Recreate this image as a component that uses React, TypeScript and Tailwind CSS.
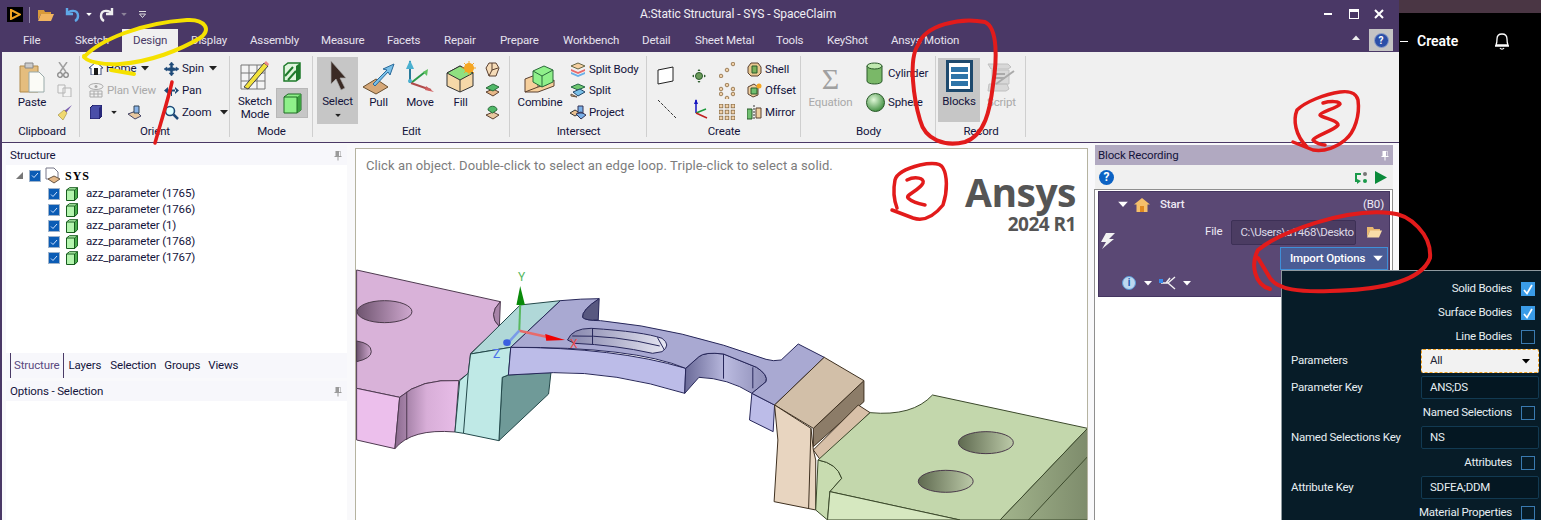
import React from "react";

const Chev = ({ c = "#222", className = "" }: { c?: string; className?: string }) => (
  <svg width="8" height="5" viewBox="0 0 8 5" className={`shrink-0 ${className}`}><path d="M0 0h8L4 4.5z" fill={c} /></svg>
);
const S = ({ w, h, vb, children, className = "" }: { w: number; h: number; vb?: string; children: React.ReactNode; className?: string }) => (
  <svg width={w} height={h} viewBox={vb ?? `0 0 ${w} ${h}`} className={`shrink-0 ${className}`}>{children}</svg>
);

const Cube = ({ size = 14 }: { size?: number }) => (
  <S w={size} h={size} vb="0 0 14 14">
    <path d="M1.500 3 4.500 .7h8v10l-3 2.800H1.500z" fill="#b4f5ae" stroke="#175c1e" strokeWidth="1" />
    <path d="M9.500 3l3-2.300v10l-3 2.800z" fill="#4aad4c" stroke="#175c1e" strokeWidth=".8" />
    <path d="M1.500 3h8v10.500" fill="none" stroke="#175c1e" strokeWidth="1" />
  </S>
);
const Check = ({ on = true }: { on?: boolean }) => (
  <span className="w-[12px] h-[12px] bg-[#0b5cb5] border border-[#9fb4cc] flex items-center justify-center shrink-0">
    {on && <svg width="8" height="7" viewBox="0 0 8 7"><path d="M1 3.5 3 5.5 7 1" fill="none" stroke="#cfe2ff" strokeWidth="1" /></svg>}
  </span>
);
const Pin = ({ c = "#9a9a9a" }: { c?: string }) => (
  <svg width="8" height="11" viewBox="0 0 8 11"><path d="M1.500 1h5v5h1v1H4.500v3.500h-1V7H.5V6h1zM5 1.500v4.500h1V1.500z" fill={c} /></svg>
);

const Group = ({ w, label, children }: { w: string; label: string; children: React.ReactNode }) => (
  <div className={`${w} shrink-0 h-full flex flex-col relative`}>
    <div className="h-[71px] pt-[7px] flex">{children}</div>
    <div className="text-center h-[18px] leading-[17px] text-[#14143c]">{label}</div>
    <div className="absolute right-0 top-[4px] bottom-[5px] w-px bg-[#cfcfcf]" />
  </div>
);

const Small = ({ icon, text, chev, grey, className = "", gap = "ml-[9px]" }: { icon: React.ReactNode; text?: string; chev?: boolean; grey?: boolean; className?: string; gap?: string }) => (
  <div className={`h-[22px] flex items-center ${className}`}>
    {icon}
    {text && <span className={`ml-[3px] whitespace-nowrap ${grey ? "text-[#a9a9a9]" : "text-[#14143c]"}`}>{text}</span>}
    {chev && <Chev className={gap} />}
  </div>
);

const Big = ({ label, icon, w, grey }: { label: string; icon: React.ReactNode; w: string; grey?: boolean }) => (
  <div className={`${w} flex flex-col items-center shrink-0`}>
    <div className="h-[36px] flex items-center">{icon}</div>
    <span className={`whitespace-nowrap leading-[14px] ${grey ? "text-[#a9a9a9]" : "text-[#14143c]"}`}>{label}</span>
  </div>
);

const tabs: [string, string, string][] = [
  ["File", "w-[52px]", "pl-[11px]"], ["Sketch", "w-[58px]", "pl-[11px]"], ["Design", "w-[56px]", "pl-[11px]"],
  ["Display", "w-[61px]", "pl-[13px]"], ["Assembly", "w-[71px]", "pl-[11px]"], ["Measure", "w-[66px]", "pl-[11px]"],
  ["Facets", "w-[57px]", "pl-[11px]"], ["Repair", "w-[56px]", "pl-[11px]"], ["Prepare", "w-[63px]", "pl-[11px]"],
  ["Workbench", "w-[79px]", "pl-[11px]"], ["Detail", "w-[53px]", "pl-[11px]"], ["Sheet Metal", "w-[81px]", "pl-[11px]"],
  ["Tools", "w-[51px]", "pl-[11px]"], ["KeyShot", "w-[64px]", "pl-[11px]"], ["Ansys Motion", "w-[100px]", "pl-[11px]"],
];

const TitleBar = () => (
  <div className="h-[29px] relative flex items-center text-white">
    <div className="ml-[7px] w-[16px] h-[15px] bg-black flex items-center justify-center">
      <svg width="11" height="11" viewBox="0 0 11 11"><path d="M1 1 10 5.500 1 10z" fill="none" stroke="#f5a623" strokeWidth="2" /></svg>
    </div>
    <div className="ml-[6px] w-px h-[16px] bg-[#8f84a6]" />
    <S w={16} h={13} className="ml-[8px]"><path d="M0 2h6l1 2h6v2H3l-3 6z" fill="#d99a3a" /><path d="M3 6h13l-3 7H0z" fill="#f2b560" /></S>
    <S w={16} h={15} className="ml-[10px]"><path d="M3 1v6h6M3 7c2-4 11-5 11 2 0 2-1 4-3 5" fill="none" stroke="#5fa8e8" strokeWidth="2.400" /></S>
    <Chev c="#fff" className="ml-[5px] scale-75" />
    <S w={16} h={15} className="ml-[6px]"><path d="M13 1v6H7M13 7c-2-4-11-5-11 2 0 2 1 4 3 5" fill="none" stroke="#eee" strokeWidth="2.400" /></S>
    <Chev c="#8c8399" className="ml-[5px] scale-75" />
    <S w={7} h={7} className="ml-[11px]"><path d="M0 .5h7M.5 3h6L3.500 6.500z" fill="none" stroke="#ddd" strokeWidth="1" /></S>
    <div className="absolute left-[640px] top-[6px] leading-[16px] whitespace-nowrap text-[#f0eef4] text-[12px] tracking-[-0.1px]">A:Static Structural - SYS - SpaceClaim</div>
    <div className="absolute left-[1324px] top-[9px] flex items-center">
      <div className="w-[8px] h-[2px] bg-white" />
      <div className="ml-[17px] w-[10px] h-[10px] border border-white border-t-[3px]" />
      <svg className="ml-[15px]" width="10" height="10" viewBox="0 0 10 10"><path d="M1 1l8 8M9 1l-8 8" stroke="#fff" strokeWidth="2" /></svg>
    </div>
  </div>
);

const TabBar = () => (
  <div className="h-[23px] flex relative pl-[12px]">
    {tabs.map(([t, w, p]) => (
      <div key={t} className={`${w} ${p} shrink-0 leading-[22px] whitespace-nowrap ${t === "Design" ? "bg-[#f0f0f0] text-[#4a3a66]" : "text-[#e6e2ee]"}`}>{t}</div>
    ))}
    <div className="absolute left-[1352px] top-[6px]"><svg width="8" height="5" viewBox="0 0 8 5"><path d="M0 5h8L4 .5z" fill="#eee" /></svg></div>
    <div className="absolute left-[1369px] top-0 w-[24px] h-[22px] bg-[#c4c4c4] flex items-center justify-center">
      <span className="w-[15px] h-[15px] rounded-full bg-[#2b4fa8] border border-[#8fa0c8] text-white text-[10px] leading-[13px] font-bold text-center">?</span>
    </div>
  </div>
);

const Ribbon = () => (
  <div className="h-[90px] bg-[#f0f0f0] flex pl-[2px] ml-[2px]">
    <Group w="w-[76px]" label="Clipboard">
      <div className="flex">
        <Big w="w-[56px]" label="Paste" icon={
          <S w={26} h={32}><path d="M1 5h18v26H1z" fill="#e4bd7e" stroke="#b08a4a" /><path d="M6 2h8v5H6z" fill="#ccc" stroke="#888" /><path d="M10 11h10l5 5v15H10z" fill="#fbfbf6" stroke="#9aa" /></S>
        } />
        <div className="flex flex-col -ml-[3px]">
          <div className="h-[22px] flex items-center"><S w={12} h={16}><path d="M2 0l7 10M10 0 3 10" stroke="#a0a0a0" strokeWidth="1.500" /><circle cx="3" cy="13" r="2.300" fill="none" stroke="#888" strokeWidth="1.300" /><circle cx="9" cy="13" r="2.300" fill="none" stroke="#888" strokeWidth="1.300" /></S></div>
          <div className="h-[22px] flex items-center"><S w={15} h={13}><path d="M1 1h7v8H1zM6 4h8v9H6z" fill="#f4f4f4" stroke="#b5b5b5" /></S></div>
          <div className="h-[22px] flex items-center"><S w={16} h={15}><path d="M15 0 7 6l2 2 6-8z" fill="#7a5fb0" /><path d="M7 5 1 10l5 5 4-7z" fill="#f0d870" stroke="#9a8a40" strokeWidth=".6" /></S></div>
        </div>
      </div>
    </Group>
    <Group w="w-[150px]" label="Orient">
      <div className="flex pl-[9px] -mt-[1px]">
        <div className="w-[75px] flex flex-col">
          <Small text="Home" chev gap="ml-[5px]" icon={<S w={14} h={13}><path d="M7 0 0 6h2v7h10V6h2z" fill="#fff" stroke="#3b4a7a" /><path d="M5 6h4v7H5z" fill="#1a1a1a" /></S>} />
          <Small grey text="Plan View" className="-ml-[1px]" icon={<S w={16} h={15}><ellipse cx="8" cy="3.500" rx="7" ry="3" fill="none" stroke="#aaa" /><circle cx="8" cy="3.500" r="1.500" fill="#aaa" /><path d="M2 8h12v6H2zM2 11h12M6 8v6M10 8v6" fill="none" stroke="#aaa" /></S>} />
          <div className="h-[22px] flex items-center pl-[1px]">
            <S w={12} h={14}><path d="M0 3 3 0h9v11l-3 3H0z" fill="#4a4fa8" stroke="#14145a" /><path d="M9 3 12 0v11l-3 3z" fill="#28287a" /></S>
            <Chev className="ml-[8px] scale-75" />
            <S w={15} h={15} className="ml-[9px]"><path d="M1 9 9 6l5 5-6 3z" fill="#e8c8a0" stroke="#446" /><path d="M7 1h5v7H7z" fill="#8ab4e8" stroke="#345" /></S>
          </div>
        </div>
        <div className="flex flex-col">
          <Small text="Spin" chev gap="ml-[5px]" icon={<S w={15} h={14}><path d="M7.500 0 5 3h1.500v2.500L3 6.500V5L0 7l3 2V8l3.500 1v2H5l2.500 3 2.500-3H8.500V9L12 8v1l3-2-3-2v1.500L8.500 5.500V3H10z" fill="#1e4a78" stroke="#1e4a78" strokeWidth=".5" /></S>} />
          <Small text="Pan" icon={<S w={15} h={11}><path d="M0 5.500 4 2v7zM15 5.500 11 2v7zM3 4.500h9v2H3z" fill="#1e4a78" /><path d="M7.500 0v11" stroke="#1e4a78" /></S>} />
          <Small text="Zoom" chev icon={<S w={15} h={15}><circle cx="6" cy="6" r="4.500" fill="#dff" stroke="#1e4a78" strokeWidth="1.600" /><path d="M9.500 9.500 14 14" stroke="#1e4a78" strokeWidth="2.500" /></S>} />
        </div>
      </div>
    </Group>
    <Group w="w-[83px]" label="Mode">
      <div className="flex pl-[6px] -mt-[1px]">
        <div className="w-[38px] flex flex-col items-center">
          <div className="h-[33px] flex items-center">
            <S w={30} h={30}><path d="M1 5h24v24H1zM1 13h24M1 21h24M9 5v24M17 5v24" fill="#f4f4f4" stroke="#777" /><path d="M4 27 24 3l4 3L8 29z" fill="#f2e23c" stroke="#444" /><path d="M24 3l2-2 3 3-1 2z" fill="#e88" /></S>
          </div>
          <div className="leading-[13px] text-center text-[#14143c] mt-[4px]">Sketch<br />Mode</div>
        </div>
        <div className="ml-[1px] w-[34px] flex flex-col items-center -mt-[1px]">
          <div className="h-[30px] flex items-center">
            <S w={18} h={20}><path d="M1 4 5 1h12v15l-4 3H1z" fill="#dff5dc" stroke="#1e7a2a" strokeWidth="1.500" /><path d="M2 14 10 5M5 18l8-9" stroke="#1e7a2a" strokeWidth="2" /><path d="M13 4l4-3v15l-4 3z" fill="#1e7a2a" /></S>
          </div>
          <div className="w-[32px] h-[30px] bg-[#c6c6c6] border border-[#b8b8b8] flex items-center justify-center mt-[1px]">
            <S w={19} h={21}><path d="M1 4 5 1h13v16l-4 3H1z" fill="#8ff08a" stroke="#1e6a24" /><path d="M14 4l4-3v16l-4 3z" fill="#3ca040" /><path d="M1 4h13v16" fill="none" stroke="#1e6a24" /></S>
          </div>
        </div>
      </div>
    </Group>
    <Group w="w-[197px]" label="Edit">
      <div className="flex pl-[4px] -mt-[2px]">
        <div className="w-[41px] h-[67px] bg-[#c6c6c6] flex flex-col items-center">
          <div className="h-[36px] flex items-center pt-[2px]"><S w={20} h={30}><path d="M3 0 18 17h-6l5 10-4 2-5-11-5 5z" fill="#3a2a24" stroke="#aaa" strokeWidth=".7" /></S></div>
          <span className="text-[#14143c] leading-[14px] mt-[1px]">Select</span>
          <Chev className="mt-[5px] scale-75" />
        </div>
        <div className="flex mt-[2px]">
          <Big w="w-[41px]" label="Pull" icon={<S w={32} h={32} className="mt-[4px]"><path d="M0 24 13 16l12 8-12 7z" fill="#d6a878" stroke="#6a5030" /><path d="M10 21 24 7l-4-1 11-5-4 11-2-3-13 14z" fill="#7ac0e8" stroke="#2a6a9a" /></S>} />
          <Big w="w-[42px]" label="Move" icon={<S w={30} h={34}><path d="M5 1v22" stroke="#2a7a9a" strokeWidth="2" /><path d="M5 0 1 9h8z" fill="#4ab0d0" /><path d="M6 23 20 12" stroke="#2a9a4a" strokeWidth="2" /><path d="M6 23l20 7" stroke="#b04a4a" strokeWidth="2" /><path d="M20 30l9 2-8-6z" fill="#d06060" /><path d="M18 12l5-3-1 7z" fill="#60c060" /><circle cx="5" cy="21" r="2" fill="#4ab0d0" /></S>} />
          <Big w="w-[39px]" label="Fill" icon={<S w={30} h={32}><path d="M1 12 14 5l13 7v13l-13 6L1 25z" fill="#f6d8a8" stroke="#333" /><path d="M1 12l13-7 13 7-13 7z" fill="#90e080" stroke="#333" /><path d="M14 19v12" stroke="#333" /><circle cx="23" cy="7" r="5" fill="#f5a623" /><path d="M23 0v14M16 7h14M18 2l10 10M28 2 18 12" stroke="#f5a623" /></S>} />
          <div className="ml-[5px] flex flex-col">
            <div className="h-[22px] flex items-center"><S w={15} h={15}><path d="M4 1h7l3 5-3 8H4L1 6z" fill="#f6dcb8" stroke="#5a4030" /><path d="M7 1v7l-3 6M7 8l6-2" fill="none" stroke="#5a4030" /></S></div>
            <div className="h-[22px] flex items-center"><S w={15} h={15}><path d="M1 9 8 6l6 3-6 4z" fill="#e8b888" stroke="#5a4030" /><path d="M1 5l7-4 6 3-6 4z" fill="#50b868" stroke="#2a6a3a" /></S></div>
            <div className="h-[22px] flex items-center"><S w={15} h={15}><path d="M1 10 8 7l6 3-6 4z" fill="#e8c8a0" stroke="#5a4030" /><path d="M3 5c0-5 9-5 9 0l-4.500 3z" fill="#50b868" stroke="#2a6a3a" /></S></div>
          </div>
        </div>
      </div>
    </Group>
    <Group w="w-[137px]" label="Intersect">
      <div className="flex">
        <Big w="w-[60px]" label="Combine" icon={<S w={32} h={28} className="mt-[4px]"><path d="M1 14 14 9v13L1 27zM14 22l8-2 8-5v6l-16 6H1" fill="#f6cf9c" stroke="#5a4030" /><path d="M9 6l11-5 9 4v12l-11 5-9-5z" fill="#8ff08a" stroke="#2a6a3a" /><path d="M9 6l9 5 11-6M18 11v11" fill="none" stroke="#2a6a3a" /></S>} />
        <div className="flex flex-col">
          <Small text="Split Body" icon={<S w={16} h={15}><path d="M1 4l7-3 7 3-7 3z" fill="#f6d0a0" stroke="#664" /><path d="M1 7l7 3 7-3v2l-7 3-7-3z" fill="#e86a6a" /><path d="M1 10l7 3 7-3v2l-7 3-7-3z" fill="#6ab0e8" /></S>} />
          <Small text="Split" icon={<S w={16} h={15}><path d="M1 4l7-3 7 3-7 3z" fill="#70c870" stroke="#264" /><path d="M3 9l7-3 5 3-7 4z" fill="#7ac0e8" stroke="#246" /><path d="M1 11l6 3-6-1z" fill="#e8c090" stroke="#654" /></S>} />
          <Small text="Project" icon={<S w={16} h={15}><path d="M0 8l5-3 5 3-5 3z" fill="#e8c090" stroke="#333" /><path d="M8 1h5v7H8zM6 9l5-2 5 3-5 4z" fill="#7ab0e8" stroke="#335" /></S>} />
        </div>
      </div>
    </Group>
    <Group w="w-[154px]" label="Create">
      <div className="flex pl-[10px]">
        <div className="flex flex-col pt-[2px] w-[26px]">
          <div className="h-[30px] flex items-center"><S w={17} h={19}><path d="M1 4 16 1v14L1 18z" fill="#fff" stroke="#222" /></S></div>
          <div className="h-[30px] flex items-center mt-[4px]"><S w={20} h={20}><path d="M1 1 19 19" stroke="#333" strokeDasharray="3 1.500" /></S></div>
        </div>
        <div className="flex flex-col w-[32px] items-center pt-[2px]">
          <div className="h-[30px] flex items-center"><S w={14} h={14}><circle cx="7" cy="7" r="3.500" fill="#6a9a5a" stroke="#2a5a2a" /><path d="M7 0 5.500 2h3zM7 14l-1.500-2h3zM0 7l2-1.500v3zM14 7l-2-1.500v3z" fill="#2a5a2a" /></S></div>
          <div className="h-[30px] flex items-center mt-[4px]"><S w={17} h={20}><path d="M5 1v13" stroke="#1414c0" strokeWidth="1.500" /><path d="M5 0 3 5h4z" fill="#1414c0" /><path d="M5 14 15 10" stroke="#1a9a3a" strokeWidth="1.500" /><path d="M5 14l11 5" stroke="#c02020" strokeWidth="1.500" /></S></div>
        </div>
        <div className="flex flex-col w-[24px] items-center">
          {[0, 1, 2].map(r => (
            <div key={r} className="h-[22px] flex items-center">
              <S w={16} h={16}>
                {r === 0 && [[2, 14], [8, 8], [14, 2]].map(([x, y]) => <circle key={x} cx={x} cy={y} r="1.800" fill="#f0d0a8" stroke="#8a6a40" strokeWidth=".8" />)}
                {r === 1 && [[8, 2], [2, 6], [14, 6], [2, 11], [14, 11], [8, 15]].map(([x, y], i) => <circle key={i} cx={x} cy={y} r="1.800" fill="#f0d0a8" stroke="#8a6a40" strokeWidth=".8" />)}
                {r === 2 && [2, 8, 14].flatMap(x => [2, 8, 14].map(y => <rect key={`${x}${y}`} x={x - 1.8} y={y - 1.8} width="3.600" height="3.600" fill="#f0d0a8" stroke="#8a6a40" strokeWidth=".8" />))}
              </S>
            </div>
          ))}
        </div>
        <div className="flex flex-col ml-[8px]">
          <Small text="Shell" icon={<S w={15} h={15}><path d="M4 1h7l3 4v6l-3 3H4L1 11V5z" fill="#e8c890" stroke="#5a4030" /><path d="M5 4h5v7H5z" fill="#7ab05a" stroke="#2a5a2a" /></S>} />
          <Small text="Offset" icon={<S w={15} h={15}><path d="M1 4l6-3 4 3v8l-5 2-5-3z" fill="#f0d0a0" stroke="#5a4030" /><path d="M4 5h6v6H4z" fill="#70c070" stroke="#2a5a2a" /><circle cx="12" cy="3" r="2.500" fill="#f5a623" /></S>} />
          <Small text="Mirror" icon={<S w={15} h={15}><path d="M0 4h5v10H0z" fill="#70c070" stroke="#2a5a2a" /><path d="M9 3h5v10H9z" fill="#f0d0a0" stroke="#5a4030" /><path d="M7 0v15" stroke="#333" strokeDasharray="2 1" /></S>} />
        </div>
      </div>
    </Group>
    <Group w="w-[135px]" label="Body">
      <div className="flex pl-[1px]">
        <Big w="w-[57px]" label="Equation" grey icon={<span className="font-['Liberation_Serif',serif] text-[30px] leading-[34px] text-[#a0a0a0] mt-[4px]">Σ</span>} />
        <div className="flex flex-col ml-[7px]">
          <div className="h-[29px] flex items-center">
            <S w={17} h={23}><path d="M1 4v15c0 4 15 4 15 0V4z" fill="#7ab868" stroke="#2a5a2a" /><ellipse cx="8.500" cy="4" rx="7.500" ry="3" fill="#c0e8b0" stroke="#2a5a2a" /></S>
            <span className="ml-[5px] text-[#14143c]">Cylinder</span>
          </div>
          <div className="h-[29px] flex items-center">
            <S w={19} h={19}><defs><radialGradient id="sp" cx=".4" cy=".35" r=".7"><stop offset="0" stopColor="#e0f8d8" /><stop offset="1" stopColor="#3a8a3a" /></radialGradient></defs><circle cx="9.500" cy="9.500" r="9" fill="url(#sp)" stroke="#2a5a2a" /></S>
            <span className="ml-[3px] text-[#14143c]">Sphere</span>
          </div>
        </div>
      </div>
    </Group>
    <Group w="w-[90px]" label="Record">
      <div className="flex pl-[2px]">
        <div className="w-[42px] h-[64px] bg-[#c6c6c6] flex flex-col items-center -mt-[1px]">
          <div className="mt-[2px] w-[27px] h-[32px] bg-white border-[3px] border-[#1e4a6e] flex flex-col justify-center gap-[2px] px-[2px]">
            <div className="h-[5px] bg-[#2e74a8]" /><div className="h-[5px] bg-[#2e74a8]" /><div className="h-[5px] bg-[#2e74a8]" />
          </div>
          <span className="text-[#14143c] leading-[14px] mt-[2px]">Blocks</span>
        </div>
        <Big w="w-[43px]" label="Script" grey icon={<S w={31} h={30}><path d="M2 2h20l3 3-3 2H5zM6 8h17v14H6zM3 22h18l2 5-3 2H2z" fill="#d8d8d8" stroke="#c0c0c0" /><path d="M9 12h10M9 16h10M10 22 28 9" stroke="#aaa" strokeWidth="2" /></S>} />
      </div>
    </Group>
  </div>
);

const LeftPanel = () => (
  <div className="w-[341px] shrink-0 flex flex-col pt-[2px]">
    <div className="h-[20px] bg-[#f7f7fb] flex items-center justify-between pl-[4px] pr-[4px] pt-[1px] text-[#14143c]"><span>Structure</span><span className="mr-[1px]"><Pin /></span></div>
    <div className="h-[188px] bg-white relative pt-[2px] pl-[10px]">
      <div className="h-[17px] mb-[2px] flex items-center text-black">
        <svg width="7" height="7" viewBox="0 0 7 7"><path d="M7 0v7H0z" fill="#777" /></svg>
        <span className="ml-[6px]"><Check /></span>
        <S w={15} h={18} className="ml-[4px]"><path d="M1 1h8l4 4v7H1z" fill="#fff" stroke="#778" /><path d="M3 12l6-3 6 3-6 4z" fill="#e4b888" stroke="#654" /></S>
        <span className="ml-[5px] font-['Liberation_Serif',serif] font-bold text-[12px] tracking-[1px]">SYS</span>
      </div>
      {["1765", "1766", "1", "1768", "1767"].map(n => (
        <div key={n} className="h-[16px] flex items-center pl-[32px] text-[#14143c]">
          <Check />
          <span className="ml-[5px]"><Cube /></span>
          <span className="ml-[7px] whitespace-nowrap">azz_parameter ({n})</span>
        </div>
      ))}
    </div>
    <div className="h-[25px] bg-[#f7f7fb] flex items-stretch pl-[4px] text-[#14143c]">
      <span className="border-x border-[#4a3a66] px-[3px] leading-[24px] text-[#5a4a80]">Structure</span>
      <span className="ml-[5px] leading-[24px]">Layers</span>
      <span className="ml-[9px] leading-[24px]">Selection</span>
      <span className="ml-[8px] leading-[24px]">Groups</span>
      <span className="ml-[8px] leading-[24px]">Views</span>
    </div>
    <div className="mt-[3px] h-[20px] bg-[#f7f7fb] flex items-center justify-between pl-[4px] pr-[4px] pt-[1px] text-[#14143c]"><span>Options - Selection</span><span className="mr-[1px]"><Pin /></span></div>
    <div className="flex-1 bg-white" />
  </div>
);

const Hole = ({ cx, cy, rx, ry, fill }: { cx: number; cy: number; rx: number; ry: number; fill: string }) => (
  <ellipse cx={cx} cy={cy} rx={rx} ry={ry} fill={fill} stroke="#4a3a4a" strokeWidth="1" vectorEffect="non-scaling-stroke" />
);

const Model = () => (
  <svg viewBox="356 149 731 371" className="w-full h-full block">
    <defs>
      <linearGradient id="ph" x1="0" x2="1"><stop offset="0" stopColor="#6f5570" /><stop offset="1" stopColor="#cfa8cf" /></linearGradient>
      <linearGradient id="gh" x1="0" x2="1"><stop offset="0" stopColor="#5f6a50" /><stop offset="1" stopColor="#bccaa8" /></linearGradient>
      <linearGradient id="pw" x1="0" x2="1"><stop offset="0" stopColor="#8a6a8e" /><stop offset=".5" stopColor="#d8aed8" /><stop offset="1" stopColor="#e8bde8" /></linearGradient>
      <linearGradient id="vw" x1="0" x2="1"><stop offset="0" stopColor="#6a6a98" /><stop offset=".5" stopColor="#babadf" /><stop offset="1" stopColor="#8c8cb6" /></linearGradient>
      <linearGradient id="sl" x1="0" x2="1"><stop offset="0" stopColor="#8484ac" /><stop offset="1" stopColor="#e6e6f2" /></linearGradient>
      <linearGradient id="gw" x1="0" x2="1"><stop offset="0" stopColor="#a2b48c" /><stop offset="1" stopColor="#7e8c6c" /></linearGradient>
    </defs>
    <g transform="translate(350 260) scale(0.4728 0.3333)" strokeWidth="1" strokeLinejoin="round">
      <g stroke="#4e3a50">
        <path vectorEffect="non-scaling-stroke" d="M14 30L318 125Q290 165 316 200L255 280L250 340L230 362Q150 355 105 412L14 385Z" fill="#d9b2d9" />
        <path vectorEffect="non-scaling-stroke" d="M14 385L105 412L95 566L14 540Z" fill="#ecbfec" />
        <path vectorEffect="non-scaling-stroke" d="M105 412Q150 355 230 362L222 516Q130 505 95 566Z" fill="url(#pw)" />
        <path vectorEffect="non-scaling-stroke" d="M318 125Q290 165 316 200Z" fill="#a884a8" />
        <path vectorEffect="non-scaling-stroke" d="M120 395V540" fill="none" />
      </g>
      <Hole cx={73} cy={155} rx={58} ry={33} fill="url(#ph)" />
      <path vectorEffect="non-scaling-stroke" d="M14 243Q45 250 45 275Q45 295 14 305Z" fill="url(#ph)" stroke="#4a3a4a" />
      <g stroke="#23484a">
        <path vectorEffect="non-scaling-stroke" d="M335 345L425 338L420 402L315 542L322 352Z" fill="#6f9a98" />
        <path vectorEffect="non-scaling-stroke" d="M360 135L445 122L340 262L255 282Z" fill="#b0d8d8" />
        <path vectorEffect="non-scaling-stroke" d="M255 282L340 262L335 345L322 352L315 542L240 520L222 516L232 362L250 340Z" fill="#bfe9e6" />
        <path vectorEffect="non-scaling-stroke" d="M250 340L240 520" fill="none" />
      </g>
      <g stroke="#27275a">
        <path vectorEffect="non-scaling-stroke" d="M850 400L898 435L895 515L845 480Z" fill="#bcbce8" />
        <path vectorEffect="non-scaling-stroke" d="M340 262Q560 262 710 325L708 400Q560 335 430 338L335 345Z" fill="#bcbce8" />
        <path vectorEffect="non-scaling-stroke" d="M710 325L738 290Q750 275 790 282L860 322Q885 345 880 365L850 400Q800 355 738 352L708 400Z" fill="url(#vw)" />
        <path vectorEffect="non-scaling-stroke" d="M445 122Q490 116 527 116Q490 150 492 172Q498 182 530 182Q700 205 880 298Q895 305 912 300L948 252L1003 292L898 435L850 400L880 365Q885 345 860 322L790 282Q750 275 738 290L710 325Q600 260 340 262Z" fill="#a9a9d2" />
        <path vectorEffect="non-scaling-stroke" d="M527 116L525 180Q498 182 492 172Q490 150 527 116Z" fill="#585880" />
        <path vectorEffect="non-scaling-stroke" d="M460 240Q470 205 510 205Q620 215 660 235Q680 255 660 275L640 280Q560 255 475 250Z" fill="url(#sl)" />
        <path vectorEffect="non-scaling-stroke" d="M513 205V252M790 282V356M852 322V385M650 232L665 270M470 228Q560 225 655 258" fill="none" />
      </g>
      <g stroke="#3e3020">
        <path vectorEffect="non-scaling-stroke" d="M1087 362L1087 425L980 560L980 505Z" fill="#8c7c68" />
        <path vectorEffect="non-scaling-stroke" d="M1075 435L1100 458L995 600L980 570Z" fill="#d8c0a8" />
        <path vectorEffect="non-scaling-stroke" d="M1003 292L1087 362L980 505L898 435Z" fill="#d2bfa8" />
        <path vectorEffect="non-scaling-stroke" d="M898 435L975 505L980 570L985 600L985 750L897 725L905 540Z" fill="#e8d5c0" />
        <path vectorEffect="non-scaling-stroke" d="M975 505 970 745" fill="none" />
      </g>
      <g stroke="#3c4a2c">
        <path vectorEffect="non-scaling-stroke" d="M990 600Q1030 610 1040 655L1015 695L1010 780L985 750Z" fill="#c8dcb0" />
        <path vectorEffect="non-scaling-stroke" d="M1100 458Q1190 470 1232 405L1560 505L1375 780L1290 780L1015 695L1040 655Q1030 610 990 600Z" fill="#c3d7ac" />
        <path vectorEffect="non-scaling-stroke" d="M1015 695L1290 780H1010Z" fill="#d6e8c0" />
        <path vectorEffect="non-scaling-stroke" d="M1560 505V780H1375Z" fill="url(#gw)" />
        <path vectorEffect="non-scaling-stroke" d="M1560 590L1435 780" fill="none" />
      </g>
      <Hole cx={1345} cy={548} rx={58} ry={33} fill="url(#gh)" />
      <Hole cx={1260} cy={664} rx={58} ry={33} fill="url(#gh)" />
      <path vectorEffect="non-scaling-stroke" d="M358 212L360 135" stroke="#57b85f" strokeWidth="2" />
      <path d="M360 78L370 135L352 135Z" fill="#0a8a0a" />
      <path vectorEffect="non-scaling-stroke" d="M358 212L415 230" stroke="#e86a6a" strokeWidth="2.500" />
      <path d="M413 222L455 240L415 242Z" fill="#f00000" />
      <path vectorEffect="non-scaling-stroke" d="M358 212L330 255" stroke="#7a9ae8" strokeWidth="2.500" />
      <ellipse cx="332" cy="248" rx="8" ry="10" fill="#3a60e0" />
    </g>
    <g fontSize="12" fontFamily="Roboto, sans-serif">
      <text x="518" y="281" fill="#57b85f">Y</text>
      <text x="570" y="348" fill="#e84a4a">X</text>
      <text x="493" y="358" fill="#4a70e8">Z</text>
    </g>
  </svg>
);

const Viewport = () => (
  <div className="w-[733px] shrink-0 pt-[5px] ml-[8px]">
    <div className="relative h-[372px] bg-white border border-[#b5b3a0] border-b-0 overflow-hidden">
      <div className="absolute inset-0"><Model /></div>
      <div className="absolute left-[10px] top-[9px] text-[#7c7c7c] text-[13px] leading-[16px] tracking-[0.1px] whitespace-nowrap">Click an object. Double-click to select an edge loop. Triple-click to select a solid.</div>
      <div className="absolute right-[11px] top-[28px] flex flex-col items-end text-[#555] font-['Open_Sans',sans-serif] font-bold">
        <span className="text-[39px] leading-[30px] tracking-[-0.5px]">Ansys</span>
        <span className="text-[19px] leading-[20px] tracking-[-0.5px] mt-[7px]">2024 R1</span>
      </div>
    </div>
  </div>
);

const RightPanel = () => (
  <div className="w-[300px] shrink-0 ml-[6px] pt-[2px] flex flex-col">
    <div className="h-[20px] bg-[#b1a9c1] flex items-center justify-between pl-[3px] pr-[3px] pt-[1px] text-[#14143c] mx-[1px]"><span>Block Recording</span><span className="mr-[1px]"><Pin c="#fff" /></span></div>
    <div className="h-[24px] bg-[#f0f0f0] flex items-center justify-between mx-[1px] pl-[4px] pr-[6px]">
      <span className="w-[15px] h-[15px] rounded-full bg-[#0c62c4] text-white font-bold text-[12px] leading-[15px] text-center">?</span>
      <span className="flex items-center gap-[7px]">
        <S w={14} h={13}><path d="M7 3H2v7h3" fill="none" stroke="#1a9a4a" strokeWidth="2" /><path d="M3 13 7 10 3 8z" fill="#1a9a4a" /><circle cx="11" cy="3" r="2" fill="#777" /><circle cx="11" cy="10" r="2" fill="#1a9a4a" /></S>
        <S w={12} h={13}><path d="M0 0 12 6.500 0 13z" fill="#0a8a3a" /></S>
      </span>
    </div>
    <div className="flex-1 bg-white border-x border-t border-[#8f8f8f] mr-[1px] pl-[3px] pr-[2px] pt-[1px]">
      <div className="h-[106px] bg-[#5a4874] border border-[#443560] flex text-[#eeeaf4]">
        <div className="w-[20px] shrink-0 flex items-center pl-[1px] pb-[6px]">
          <S w={15} h={16}><path d="M6 0h9L9 6h5L2 16l4-7H1z" fill="#f2f2f2" /></S>
        </div>
        <div className="flex-1 flex flex-col">
          <div className="h-[25px] flex items-center">
            <Chev c="#fff" className="scale-125" />
            <S w={16} h={14} className="ml-[7px]"><path d="M8 0 0 6.500h2.500V14h11V6.500H16z" fill="#f5c06a" /><path d="M6 8h4v6H6z" fill="#e08a20" /></S>
            <span className="ml-[10px] font-medium">Start</span>
            <span className="ml-auto mr-[5px]">(B0)</span>
          </div>
          <div className="h-[30px] flex items-center">
            <span className="ml-[86px]">File</span>
            <div className="ml-[9px] w-[125px] h-[25px] bg-[#4b3c62] border border-[#3d3056] rounded-[2px] pl-[8px] leading-[22px] overflow-hidden whitespace-nowrap text-[#ddd8e6] tracking-[-0.4px]">C:\Users\a1468\Deskto</div>
            <S w={15} h={12} className="ml-[11px]"><path d="M0 1h6l1 2h6v2H3L0 11z" fill="#e8b870" /><path d="M3 4.500h12l-3 7H0z" fill="#f8dca8" /></S>
          </div>
          <div className="h-[23px] flex justify-end pr-[1px]">
            <div className="w-[108px] h-[23px] bg-[#4a5c95] border border-[#3f8fd8] flex items-center pl-[9px] text-white font-medium whitespace-nowrap">
              Import Options
              <Chev c="#fff" className="ml-[9px] scale-125" />
            </div>
          </div>
          <div className="flex items-center h-[26px] pl-[3px]">
            <span className="w-[14px] h-[14px] rounded-full bg-[#bcd8f0] border border-[#5a9ad8] text-[#1a5ab0] text-[10px] leading-[12px] font-bold text-center">i</span>
            <Chev c="#fff" className="ml-[8px]" />
            <S w={17} h={14} className="ml-[7px]"><path d="M2 7 9 7M9 7 16 1M9 7l7 6M7 7l4-5" fill="none" stroke="#f2f2f2" strokeWidth="1.400" /><path d="M0 3h4v4H0z" fill="#3a8ae8" /></S>
            <Chev c="#fff" className="ml-[7px]" />
          </div>
        </div>
      </div>
    </div>
  </div>
);

const PopCheck = ({ on }: { on?: boolean }) => (
  <span className={`w-[14px] h-[14px] flex items-center justify-center shrink-0 ${on ? "bg-[#3a9ce8]" : "border border-[#3a7ab0]"}`}>
    {on && <svg width="10" height="11" viewBox="0 0 10 11"><path d="M1 6 4 9.500 9 1" fill="none" stroke="#fff" strokeWidth="1.700" /></svg>}
  </span>
);
const CheckRow = ({ label, on, h }: { label: string; on?: boolean; h: string }) => (
  <div className={`${h} flex items-center justify-end pr-[6px]`}><span className="mr-[9px]">{label}</span><PopCheck on={on} /></div>
);
const InputRow = ({ label, value, mt = "" }: { label: string; value: string; mt?: string }) => (
  <div className={`h-[25px] ${mt} flex items-center pl-[9px] pr-[2px]`}>
    <span className="flex-1 whitespace-nowrap">{label}</span>
    <div className="w-[118px] h-[23px] border border-[#123a52] rounded-[2px] pl-[8px] leading-[21px] bg-[#041722]">{value}</div>
  </div>
);

const Popup = () => (
  <div className="absolute left-[1281px] top-[270px] w-[260px] h-[250px] bg-[#071c28] border-l border-t border-[#8f9aa0] text-[#e6eef2] pt-[6px] overflow-hidden tracking-[-0.25px]">
    <CheckRow h="h-[24px]" label="Solid Bodies" on />
    <CheckRow h="h-[24px]" label="Surface Bodies" on />
    <CheckRow h="h-[24px]" label="Line Bodies" />
    <div className="h-[24px] flex items-center pl-[9px] pr-[2px]">
      <span className="flex-1">Parameters</span>
      <div className="w-[118px] h-[24px] bg-[#f2f2f2] border border-dashed border-[#f0a020] rounded-[2px] text-[#223] flex items-center justify-between pl-[8px] pr-[8px]">All<Chev c="#000" /></div>
    </div>
    <InputRow mt="mt-[2px]" label="Parameter Key" value="ANS;DS" />
    <CheckRow h="h-[25px]" label="Named Selections" />
    <InputRow label="Named Selections Key" value="NS" />
    <CheckRow h="h-[25px]" label="Attributes" />
    <InputRow label="Attribute Key" value="SDFEA;DDM" />
    <CheckRow h="h-[25px]" label="Material Properties" />
  </div>
);

const Ink = () => (
  <svg viewBox="0 0 1541 520" className="absolute inset-0 w-[1541px] h-[520px] pointer-events-none" fill="none" strokeLinecap="round" strokeLinejoin="round">
    <g stroke="#f5e100" strokeWidth="4">
      <path d="M84 57C100 40 140 23 187 20C205 19 212 30 200 38C180 50 150 62 120 64C105 65 85 62 84 56" />
      <path d="M111 70L134 74" />
    </g>
    <g stroke="#e21b1b" strokeWidth="3.500">
      <path d="M172 82C168 100 160 125 155 143" />
      <path d="M918 45C925 25 960 17 985 22C998 28 997 60 993 85C990 110 985 135 965 142C945 147 925 140 920 120C914 100 908 60 918 45" strokeWidth="4" />
      <path d="M1293 142L1313 150C1325 152 1337 147 1345 140C1355 132 1360 115 1358 100C1356 92 1347 91 1340 92C1325 94 1305 102 1297 110C1293 120 1295 135 1307 147" />
      <path d="M1323 103C1330 101 1340 101 1340 104C1338 108 1320 112 1320 115C1322 118 1338 120 1338 125C1335 130 1315 136 1313 140C1315 143 1322 145 1325 145" />
      <path d="M892 210L913 218C925 222 935 215 943 205C948 190 947 175 943 168C940 162 930 163 920 165C908 168 897 172 895 180C893 190 894 200 897 208" />
      <path d="M907 180C915 176 925 178 923 183C920 190 905 195 908 198C912 202 920 204 925 205" />
      <path d="M1258 258L1270 278C1278 290 1300 292 1330 291C1370 290 1420 285 1430 258C1432 235 1410 214 1390 213C1345 208 1280 232 1258 250C1250 265 1255 285 1270 289" strokeWidth="4" />
    </g>
  </svg>
);

export default function App() {
  return (
    <div className="relative w-[1541px] h-[520px] overflow-hidden bg-black font-['Roboto',sans-serif] text-[11.5px] tracking-[-0.15px] flex">
      <div className="w-[1399px] shrink-0 h-full bg-[#4a3866] flex flex-col">
        <TitleBar />
        <TabBar />
        <Ribbon />
        <div className="h-px bg-[#4a3866]" />
        <div className="flex-1 min-h-0 flex bg-[#f9f9fb] ml-[2px] pl-[4px]">
          <LeftPanel />
          <Viewport />
          <RightPanel />
        </div>
      </div>
      <div className="flex-1 flex flex-col text-white">
        <div className="h-[13px] bg-[#4a3644]" />
        <div className="h-[56px] flex items-center relative">
          <div className="w-[8px] h-px bg-white ml-[1px]" />
          <span className="ml-[9px] font-semibold text-[14px] tracking-normal">Create</span>
          <svg className="ml-[36px]" width="16" height="20" viewBox="0 0 16 20" fill="none" stroke="#fff" strokeWidth="1.300"><path d="M2 14c1-2 1-4 1-6 0-3 2-5 5-5s5 2 5 5c0 2 0 4 1 6zM1 15h14M6 17c1 1.500 3 1.500 4 0" /></svg>
        </div>
      </div>
      <Popup />
      <Ink />
    </div>
  );
}
